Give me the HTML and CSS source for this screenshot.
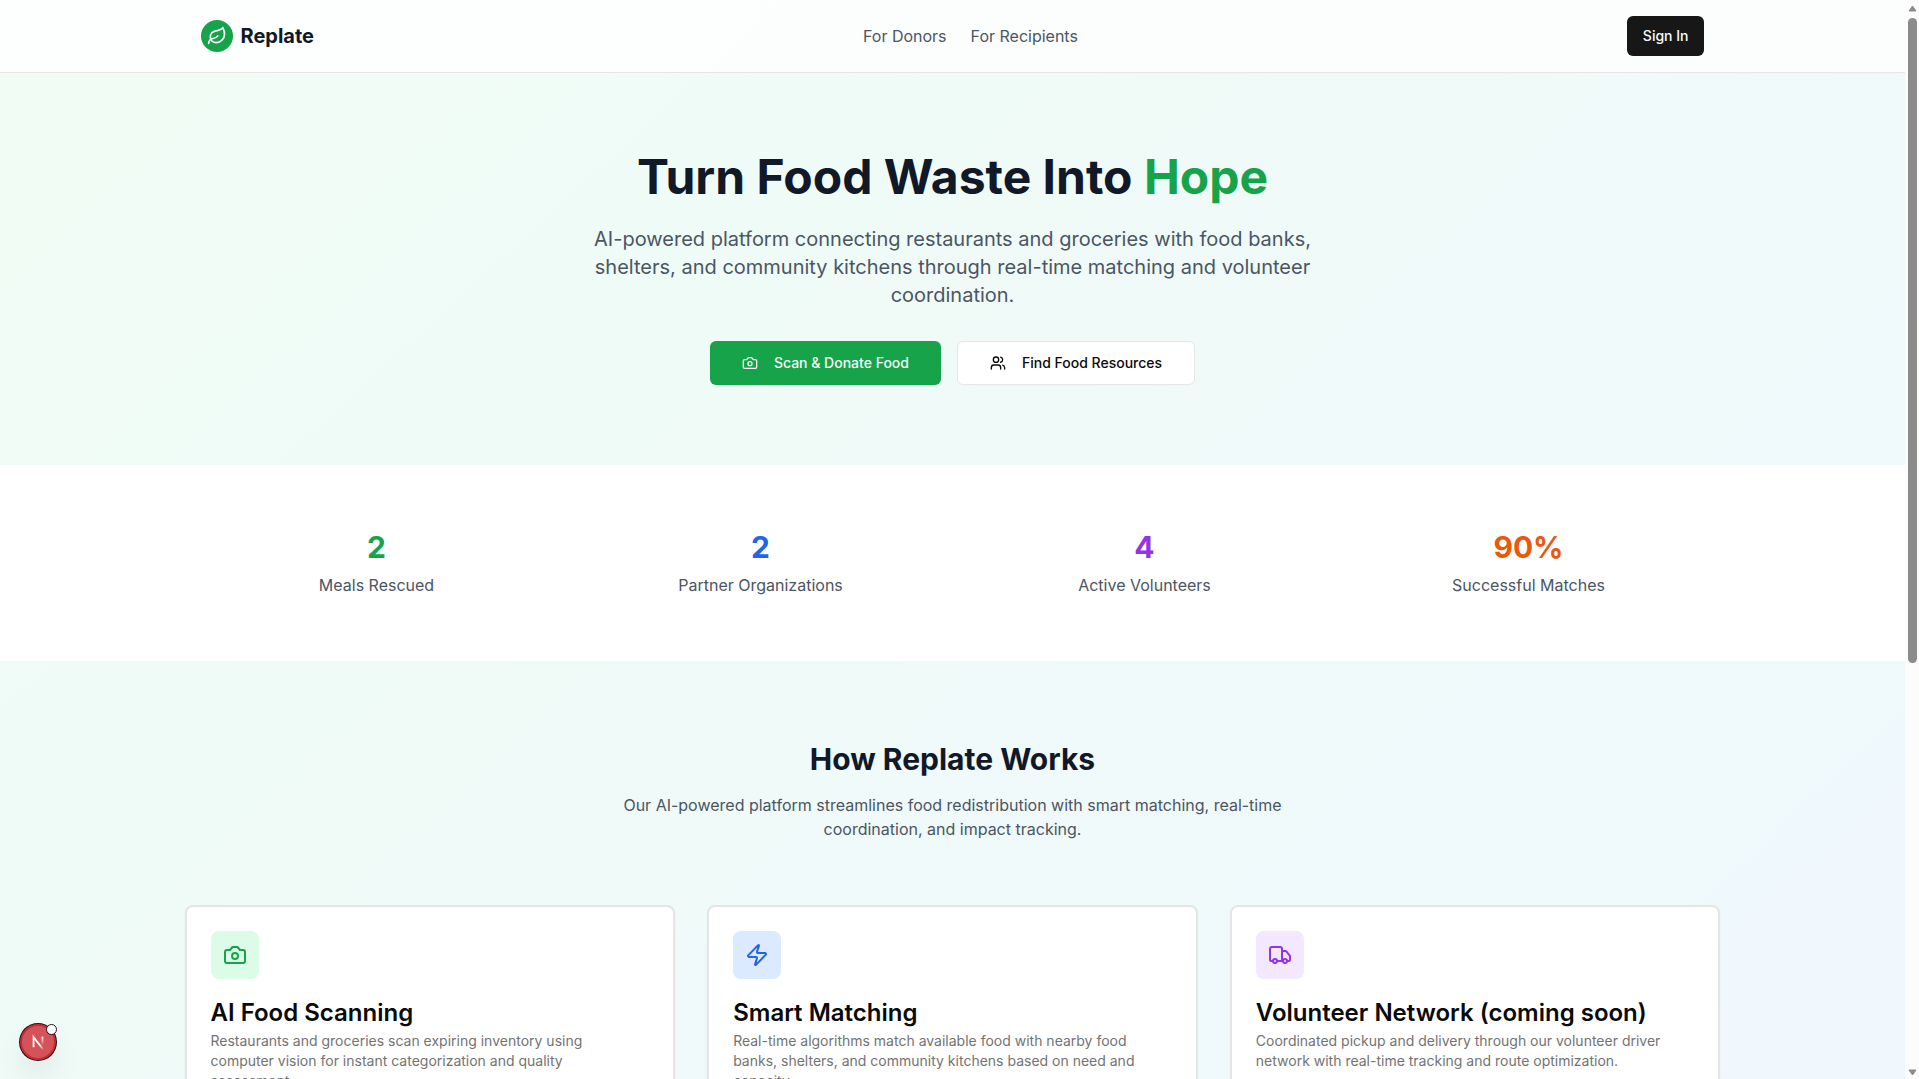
FILE: index.html
```html
<!DOCTYPE html>
<html lang="en">
<head>
  <meta charset="UTF-8">
  <meta name="viewport" content="width=device-width, initial-scale=1">
  <title>Replate</title>
  <link rel="stylesheet" href="styles.css">
</head>
<body>

<div class="page">
  <header class="header">
    <div class="container header-inner">
      <a class="brand" href="#">
        <span class="brand-mark">
          <svg class="icon icon-md" viewBox="0 0 24 24" aria-hidden="true">
            <path d="M11 20A7 7 0 0 1 9.8 6.1C15.5 5 17 4.48 19 2c1 2 2 4.18 2 8 0 5.5-4.78 10-10 10Z"/>
            <path d="M2 21c0-3 1.85-5.36 5.08-6C9.5 14.52 12 13 13 12"/>
          </svg>
        </span>
        <span class="brand-name">Replate</span>
      </a>
      <nav class="nav">
        <a href="#donors">For Donors</a>
        <a href="#recipients">For Recipients</a>
      </nav>
      <button class="btn btn-dark" type="button">Sign In</button>
    </div>
  </header>

  <section class="hero">
    <h1>Turn Food Waste Into <span class="accent">Hope</span></h1>
    <p class="hero-text">AI-powered platform connecting restaurants and groceries with food banks, shelters, and community kitchens through real-time matching and volunteer coordination.</p>
    <div class="hero-actions">
      <button class="btn btn-lg btn-green" type="button">
        <svg class="icon icon-sm" viewBox="0 0 24 24" aria-hidden="true">
          <path d="M14.5 4h-5L7 7H4a2 2 0 0 0-2 2v9a2 2 0 0 0 2 2h16a2 2 0 0 0 2-2V9a2 2 0 0 0-2-2h-3l-2.5-3z"/>
          <circle cx="12" cy="13" r="3"/>
        </svg>
        Scan &amp; Donate Food
      </button>
      <button class="btn btn-lg btn-outline" type="button">
        <svg class="icon icon-sm" viewBox="0 0 24 24" aria-hidden="true">
          <path d="M16 21v-2a4 4 0 0 0-4-4H6a4 4 0 0 0-4 4v2"/>
          <circle cx="9" cy="7" r="4"/>
          <path d="M22 21v-2a4 4 0 0 0-3-3.87"/>
          <path d="M16 3.13a4 4 0 0 1 0 7.75"/>
        </svg>
        Find Food Resources
      </button>
    </div>
  </section>

  <section class="stats">
    <div class="container stats-grid">
      <div class="stat">
        <div class="stat-value green">2</div>
        <div class="stat-label">Meals Rescued</div>
      </div>
      <div class="stat">
        <div class="stat-value blue">2</div>
        <div class="stat-label">Partner Organizations</div>
      </div>
      <div class="stat">
        <div class="stat-value purple">4</div>
        <div class="stat-label">Active Volunteers</div>
      </div>
      <div class="stat">
        <div class="stat-value orange">90%</div>
        <div class="stat-label">Successful Matches</div>
      </div>
    </div>
  </section>

  <section class="features">
    <div class="features-head">
      <h2>How Replate Works</h2>
      <p>Our AI-powered platform streamlines food redistribution with smart matching, real-time coordination, and impact tracking.</p>
    </div>
    <div class="cards">
      <article class="card">
        <div class="card-icon card-icon-green">
          <svg class="icon icon-lg" viewBox="0 0 24 24" aria-hidden="true">
            <path d="M14.5 4h-5L7 7H4a2 2 0 0 0-2 2v9a2 2 0 0 0 2 2h16a2 2 0 0 0 2-2V9a2 2 0 0 0-2-2h-3l-2.5-3z"/>
            <circle cx="12" cy="13" r="3"/>
          </svg>
        </div>
        <h3>AI Food Scanning</h3>
        <p>Restaurants and groceries scan expiring inventory using computer vision for instant categorization and quality assessment.</p>
      </article>
      <article class="card">
        <div class="card-icon card-icon-blue">
          <svg class="icon icon-lg" viewBox="0 0 24 24" aria-hidden="true">
            <path d="M4 14a1 1 0 0 1-.78-1.63l9.9-10.2a.5.5 0 0 1 .86.46l-1.92 6.02A1 1 0 0 0 13 10h7a1 1 0 0 1 .78 1.63l-9.9 10.2a.5.5 0 0 1-.86-.46l1.92-6.02A1 1 0 0 0 11 14z"/>
          </svg>
        </div>
        <h3>Smart Matching</h3>
        <p>Real-time algorithms match available food with nearby food banks, shelters, and community kitchens based on need and capacity.</p>
      </article>
      <article class="card">
        <div class="card-icon card-icon-purple">
          <svg class="icon icon-lg" viewBox="0 0 24 24" aria-hidden="true">
            <path d="M14 18V6a2 2 0 0 0-2-2H4a2 2 0 0 0-2 2v11a1 1 0 0 0 1 1h2"/>
            <path d="M15 18H9"/>
            <path d="M19 18h2a1 1 0 0 0 1-1v-3.65a1 1 0 0 0-.22-.624l-3.48-4.35A1 1 0 0 0 17.52 8H14"/>
            <circle cx="17" cy="18" r="2"/>
            <circle cx="7" cy="18" r="2"/>
          </svg>
        </div>
        <h3>Volunteer Network (coming soon)</h3>
        <p>Coordinated pickup and delivery through our volunteer driver network with real-time tracking and route optimization.</p>
      </article>
    </div>
  </section>
</div>

<button class="dev-badge" type="button" aria-label="Open dev tools">
  <svg class="dev-logo" viewBox="0 0 36 36" aria-hidden="true">
    <defs>
      <linearGradient id="fade-diag" x1="20" y1="20" x2="25" y2="27" gradientUnits="userSpaceOnUse">
        <stop stop-color="#fff"/>
        <stop offset="1" stop-color="#fff" stop-opacity="0"/>
      </linearGradient>
      <linearGradient id="fade-stem" x1="0" y1="12" x2="0" y2="22" gradientUnits="userSpaceOnUse">
        <stop stop-color="#fff"/>
        <stop offset="1" stop-color="#fff" stop-opacity="0"/>
      </linearGradient>
    </defs>
    <path d="M13 24V12.500L23.500 26" fill="none" stroke="url(#fade-diag)" stroke-width="2"/>
    <path d="M23 12V22" fill="none" stroke="url(#fade-stem)" stroke-width="2"/>
  </svg>
  <span class="dev-dot"></span>
</button>

<div class="scrollbar" aria-hidden="true">
  <svg class="scroll-arrow" viewBox="0 0 9 7"><path d="M4.500 1L8 6H1Z"/></svg>
  <div class="scroll-track"><div class="scroll-thumb"></div></div>
  <svg class="scroll-arrow" viewBox="0 0 9 7"><path d="M4.500 6L8 1H1Z"/></svg>
</div>

</body>
</html>
```
FILE: styles.css
```css
* {
  box-sizing: border-box;
}
body {
  font-family: 'Inter', sans-serif;
  font-size: 16px;
  line-height: 24px;
  margin: 0;
  padding-right: 14px;
  height: 100vh;
  overflow: hidden;
  color: #0a0a0a;
}
h1, h2, h3, p {
  margin: 0;
}
a {
  color: inherit;
  text-decoration: none;
}
.page {
  min-height: 162vh;
  background: linear-gradient(to bottom right in oklab, #f0fdf4, #eff6ff);
}
.container {
  max-width: 1536px;
  margin: 0 auto;
  padding: 0 16px;
}
.icon {
  fill: none;
  stroke: currentColor;
  stroke-width: 2;
  stroke-linecap: round;
  stroke-linejoin: round;
  flex-shrink: 0;
}
.icon-sm {
  width: 16px;
  height: 16px;
}
.icon-md {
  width: 20px;
  height: 20px;
}
.icon-lg {
  width: 24px;
  height: 24px;
}

/* header */
.header {
  background: rgba(255, 255, 255, 0.8);
  border-bottom: 1px solid #e5e5e5;
}
.header-inner {
  display: flex;
  align-items: center;
  justify-content: space-between;
  padding-top: 16px;
  padding-bottom: 16px;
}
.brand {
  display: flex;
  align-items: center;
  gap: 8px;
}
.brand-mark {
  display: flex;
  align-items: center;
  justify-content: center;
  width: 32px;
  height: 32px;
  border-radius: 50%;
  background: #16a34a;
  color: #fff;
}
.brand-name {
  font-size: 20px;
  line-height: 28px;
  font-weight: 700;
  color: #111827;
}
.nav {
  display: flex;
  gap: 24px;
  color: #4b5563;
}
.nav a:hover {
  color: #111827;
}
.btn {
  display: inline-flex;
  align-items: center;
  justify-content: center;
  gap: 16px;
  height: 40px;
  padding: 0 16px;
  border: 0;
  border-radius: 6px;
  font-family: inherit;
  font-size: 14px;
  line-height: 20px;
  font-weight: 500;
  cursor: pointer;
}
.btn-dark {
  background: #171717;
  color: #fafafa;
}
.btn-lg {
  height: 44px;
  padding: 0 32px;
}
.btn-green {
  background: #16a34a;
  color: #fafafa;
}
.btn-outline {
  background: #fff;
  color: #0a0a0a;
  border: 1px solid #e5e5e5;
}

/* hero */
.hero {
  padding: 80px 16px;
  text-align: center;
}
.hero h1 {
  font-size: 48px;
  line-height: 48px;
  font-weight: 700;
  color: #111827;
  margin-bottom: 24px;
}
.hero .accent {
  color: #16a34a;
}
.hero-text {
  max-width: 768px;
  margin: 0 auto 32px;
  font-size: 20px;
  line-height: 28px;
  color: #4b5563;
}
.hero-actions {
  display: flex;
  justify-content: center;
  gap: 16px;
}

/* stats */
.stats {
  padding: 64px 0;
  background: #fff;
}
.stats-grid {
  display: grid;
  grid-template-columns: repeat(4, 1fr);
  gap: 32px;
  text-align: center;
}
.stat-value {
  font-size: 30px;
  line-height: 36px;
  font-weight: 700;
  margin-bottom: 8px;
}
.stat-label {
  color: #4b5563;
}
.green {
  color: #16a34a;
}
.blue {
  color: #2563eb;
}
.purple {
  color: #9333ea;
}
.orange {
  color: #ea580c;
}

/* how it works */
.features {
  padding: 80px 16px;
}
.features-head {
  max-width: 672px;
  margin: 0 auto 64px;
  text-align: center;
}
.features-head h2 {
  font-size: 30px;
  line-height: 36px;
  font-weight: 700;
  color: #111827;
  margin-bottom: 16px;
}
.features-head p {
  color: #4b5563;
}
.cards {
  display: grid;
  grid-template-columns: repeat(3, 1fr);
  gap: 32px;
  max-width: 1536px;
  margin: 0 auto;
}
.card {
  background: #fff;
  border: 2px solid #e5e5e5;
  border-radius: 8px;
  padding: 24px;
  box-shadow: 0 1px 2px rgba(0, 0, 0, 0.05);
}
.card-icon {
  display: flex;
  align-items: center;
  justify-content: center;
  width: 48px;
  height: 48px;
  border-radius: 8px;
  margin-bottom: 22px;
}
.card-icon-green {
  background: #dcfce7;
  color: #16a34a;
}
.card-icon-blue {
  background: #dbeafe;
  color: #2563eb;
}
.card-icon-purple {
  background: #f3e8ff;
  color: #9333ea;
}
.card h3 {
  font-size: 24px;
  line-height: 24px;
  font-weight: 600;
  margin-bottom: 6px;
}
.card p {
  font-size: 14px;
  line-height: 20px;
  color: #737373;
}

/* floating dev button */
.dev-badge {
  position: fixed;
  left: 20px;
  bottom: 19px;
  width: 36px;
  height: 36px;
  padding: 0;
  border: 2px solid #ca2a30;
  border-radius: 50%;
  background: #d4535a;
  box-shadow: 0 0 0 1px #171717, 0 16px 32px -8px rgba(0, 0, 0, 0.24);
  cursor: pointer;
}
.dev-logo {
  display: block;
  width: 32px;
  height: 32px;
}
.dev-dot {
  position: absolute;
  top: -2px;
  right: -3px;
  width: 11px;
  height: 11px;
  border: 1px solid #171717;
  border-radius: 50%;
  background: #fff;
}

/* scrollbar */
.scrollbar {
  position: fixed;
  top: 0;
  right: 0;
  bottom: 0;
  width: 14px;
  padding: 5px 2px 3px 3px;
  display: flex;
  flex-direction: column;
  gap: 6px;
  background: #fcfcfc;
}
.scroll-arrow {
  width: 9px;
  height: 7px;
  fill: #8b8b8b;
  stroke: #8b8b8b;
  stroke-linejoin: round;
}
.scroll-track {
  flex: 1;
}
.scroll-thumb {
  height: 61.7%;
  border-radius: 5px;
  background: #8b8b8b;
}
```
